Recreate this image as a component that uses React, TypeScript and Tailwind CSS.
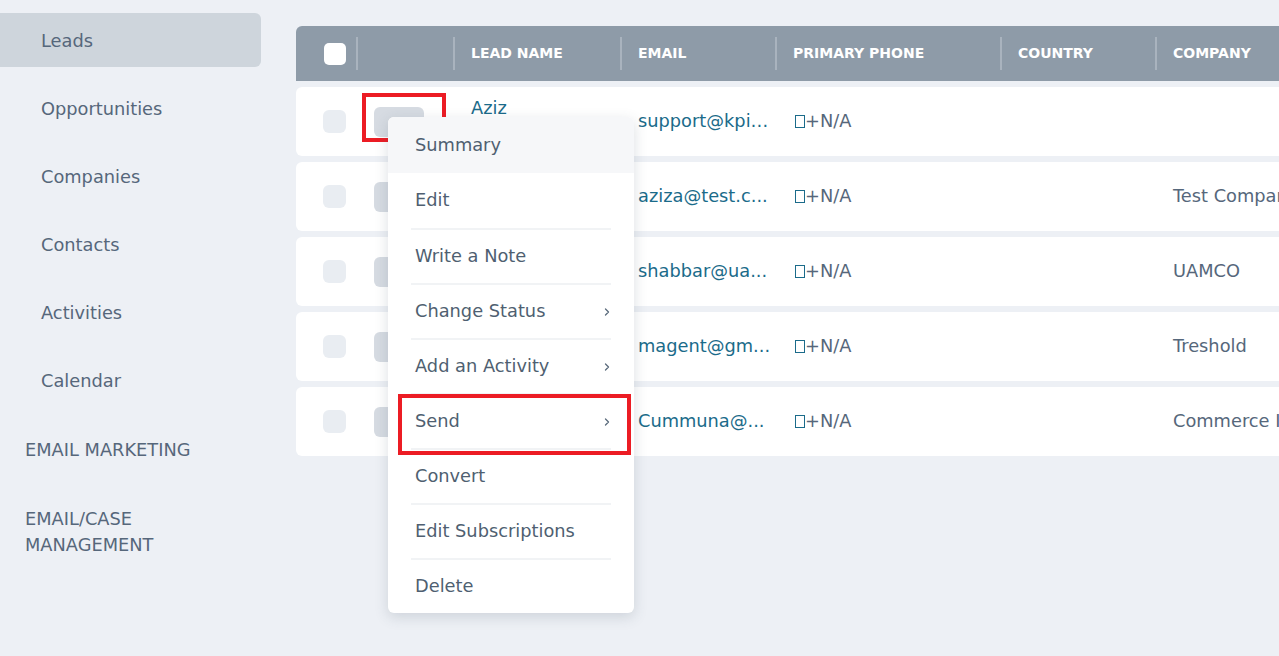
import React from "react";

const font = { fontFamily: '"DejaVu Sans", "Open Sans", sans-serif' };

const navItems = ["Leads", "Opportunities", "Companies", "Contacts", "Activities", "Calendar"];

const rows = [
  { name: "Aziz", email: "support@kpi....", company: "" },
  { name: "", email: "aziza@test.c...", company: "Test Company" },
  { name: "", email: "shabbar@ua...", company: "UAMCO" },
  { name: "", email: "magent@gm...", company: "Treshold" },
  { name: "", email: "Cummuna@...", company: "Commerce Inc" },
];

const menuItems: { label: string; sub?: boolean }[] = [
  { label: "Summary" },
  { label: "Edit" },
  { label: "Write a Note" },
  { label: "Change Status", sub: true },
  { label: "Add an Activity", sub: true },
  { label: "Send", sub: true },
  { label: "Convert" },
  { label: "Edit Subscriptions" },
  { label: "Delete" },
];

function Chevron() {
  return (
    <svg width="8" height="10" viewBox="0 0 8 10" className="text-[#5b6b7c]">
      <path d="M2.5 2 L5.5 5 L2.5 8" fill="none" stroke="currentColor" strokeWidth="1.3" strokeLinecap="round" strokeLinejoin="round" />
    </svg>
  );
}

export default function App() {
  return (
    <div className="flex h-[656px] w-[1279px] overflow-hidden bg-[#edf0f5] text-[#56677b]" style={font}>
      {/* Sidebar */}
      <aside className="w-[261px] shrink-0 pt-[13px]">
        <nav className="flex flex-col text-[17.8px]">
          {navItems.map((n, i) => (
            <div
              key={n}
              className={`flex h-[54px] items-center pl-[41px] pt-[2px] ${i === 0 ? "rounded-r-[6px] bg-[#ced5dc]" : ""} ${i > 0 ? "mt-[14px]" : ""}`}
            >
              {n}
            </div>
          ))}
          <div className="mt-[14px] flex h-[54px] items-center pl-[25px] pt-[4px] uppercase">Email Marketing</div>
          <div className="mt-[31px] pl-[25px] uppercase leading-[26px]">
            Email/Case
            <br />
            Management
          </div>
        </nav>
      </aside>

      {/* Main */}
      <main className="relative flex-1 overflow-hidden pl-[35px] pt-[26px]">
        <div className="w-[1100px]">
          {/* Header */}
          <div className="flex h-[55px] items-center rounded-tl-[6px] bg-[#8e9ba8] text-[14px] font-semibold uppercase text-white">
            <div className="flex h-full w-[60px] items-center pl-[28px]">
              <div className="h-[22px] w-[22px] rounded-[5px] bg-white" />
            </div>
            <div className="h-[33px] w-[2px] bg-[#a9b3be]" />
            <div className="w-[95px]" />
            <div className="h-[33px] w-[2px] bg-[#a9b3be]" />
            <div className="w-[165px] pl-[16px]">Lead Name</div>
            <div className="h-[33px] w-[2px] bg-[#a9b3be]" />
            <div className="w-[153px] pl-[16px]">Email</div>
            <div className="h-[33px] w-[2px] bg-[#a9b3be]" />
            <div className="w-[223px] pl-[16px]">Primary Phone</div>
            <div className="h-[33px] w-[2px] bg-[#a9b3be]" />
            <div className="w-[153px] pl-[16px]">Country</div>
            <div className="h-[33px] w-[2px] bg-[#a9b3be]" />
            <div className="pl-[16px]">Company</div>
          </div>

          {/* Rows */}
          <div className="mt-[6px] flex flex-col gap-[6px]">
            {rows.map((r, i) => (
              <div key={i} className="flex h-[69px] items-center rounded-l-[6px] bg-white text-[17.8px]">
                <div className="flex w-[62px] items-center pl-[27px]">
                  <div className="h-[23px] w-[23px] rounded-[6px] bg-[#e9edf2]" />
                </div>
                <div className="w-[97px] pl-[16px]">
                  <div className="h-[30px] w-[50px] rounded-[6px] bg-[#d6dbe2]" />
                </div>
                <div className="w-[167px] self-start pl-[16px] pt-[8px] text-[#1b6b8a]">{r.name}</div>
                <div className="w-[155px] truncate pl-[16px] pr-[6px] text-[#1b6b8a]">{r.email}</div>
                <div className="flex w-[225px] items-center pl-[18px] text-[#56677b]">
                  <span className="inline-block h-[13px] w-[10px] border border-[#1b6b8a]" />
                  <span>+N/A</span>
                </div>
                <div className="w-[155px]" />
                <div className="whitespace-nowrap pl-[16px] text-[#56677b]">{r.company}</div>
              </div>
            ))}
          </div>
        </div>

        {/* Red highlight around action button */}
        <div className="pointer-events-none absolute left-[101px] top-[93px] h-[49px] w-[84px] border-[4px] border-[#ec1c24]" />

        {/* Dropdown menu */}
        <div className="absolute left-[127px] top-[117px] w-[246px] rounded-[6px] bg-white shadow-[0_4px_14px_rgba(60,75,95,0.18)]">
          {menuItems.map((m, i) => (
            <div key={m.label} className={`${i === 0 ? "rounded-t-[6px] bg-[#f6f7f9]" : ""}`}>
              {i > 1 && <div className="mx-[23px] h-[2px] bg-[#f1f3f5]" />}
              <div
                className={`flex items-center justify-between pl-[27px] pr-[23px] text-[17.8px] text-[#4f5f71] ${i === 0 ? "h-[56px]" : i === 1 ? "h-[55px]" : "h-[53px]"}`}
              >
                <span>{m.label}</span>
                {m.sub && <Chevron />}
              </div>
            </div>
          ))}
        </div>

        {/* Red highlight around Send */}
        <div className="pointer-events-none absolute left-[137px] top-[394px] h-[61px] w-[233px] border-[4px] border-[#ec1c24]" />
      </main>
    </div>
  );
}
